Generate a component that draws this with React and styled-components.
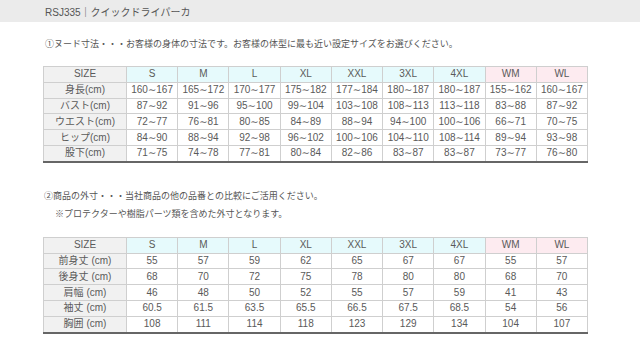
import React from "react";
import styled, { createGlobalStyle } from "styled-components";

const GlobalStyle = createGlobalStyle`
  body {
    margin: 0;
    background: #ffffff;
    font-family: "Liberation Sans", "Noto Sans CJK JP", sans-serif;
    color: #555;
  }
`;

const sizes = ["S", "M", "L", "XL", "XXL", "3XL", "4XL", "WM", "WL"];

const nudeRows = [
  ["身長(cm)", "160∼167", "165∼172", "170∼177", "175∼182", "177∼184", "180∼187", "180∼187", "155∼162", "160∼167"],
  ["バスト(cm)", "87∼92", "91∼96", "95∼100", "99∼104", "103∼108", "108∼113", "113∼118", "83∼88", "87∼92"],
  ["ウエスト(cm)", "72∼77", "76∼81", "80∼85", "84∼89", "88∼94", "94∼100", "100∼106", "66∼71", "70∼75"],
  ["ヒップ(cm)", "84∼90", "88∼94", "92∼98", "96∼102", "100∼106", "104∼110", "108∼114", "89∼94", "93∼98"],
  ["股下(cm)", "71∼75", "74∼78", "77∼81", "80∼84", "82∼86", "83∼87", "83∼87", "73∼77", "76∼80"],
];

const productRows = [
  ["前身丈 (cm)", "55", "57", "59", "62", "65", "67", "67", "55", "57"],
  ["後身丈 (cm)", "68", "70", "72", "75", "78", "80", "80", "68", "70"],
  ["肩幅 (cm)", "46", "48", "50", "52", "55", "57", "59", "41", "43"],
  ["袖丈 (cm)", "60.5", "61.5", "63.5", "65.5", "66.5", "67.5", "68.5", "54", "56"],
  ["胸囲 (cm)", "108", "111", "114", "118", "123", "129", "134", "104", "107"],
];

const Page = styled.div`
  width: 640px;
  height: 345px;
  overflow: hidden;
`;

const TitleBar = styled.div`
  height: 22px;
  background: #ebebeb;
  display: flex;
  align-items: center;
  padding-left: 45px;
  font-size: 10px;
  color: #555;
`;

const Content = styled.div`
  padding-left: 43px;
  display: flex;
  flex-direction: column;
`;

const Note = styled.p`
  margin: ${(p) => p.$top || 0}px 0 0 ${(p) => p.$indent || 0}px;
  font-size: 9px;
  line-height: 14px;
  color: #555;
  white-space: nowrap;
`;

const Table = styled.table`
  margin-top: ${(p) => p.$top}px;
  width: 545px;
  border-collapse: collapse;
  table-layout: fixed;
  border-top: 1px solid #a8a8a8;
  border-right: 1px solid #a8a8a8;
  border-left: 1px solid #666;
  border-bottom: 2px solid #666;
`;

const Cell = styled.td`
  height: 14.8px;
  padding: 0;
  border: 1px solid #cfcfcf;
  text-align: center;
  font-family: "Liberation Sans", "DejaVu Sans", "Noto Sans CJK JP", sans-serif;
  font-size: 10px;
  line-height: 14px;
  color: #5a5a5a;
  white-space: nowrap;
  background: ${(p) =>
    p.$kind === "label"
      ? "#f1f1f1"
      : p.$kind === "men"
      ? "#e6fafc"
      : p.$kind === "women"
      ? "#fdebf0"
      : "#ffffff"};
`;

const FirstCol = styled.col`
  width: 83px;
`;

const SizeTable = ({ rows, top }) => (
  <Table $top={top}>
    <colgroup>
      <FirstCol />
      {sizes.map((s) => (
        <col key={s} />
      ))}
    </colgroup>
    <tbody>
      <tr>
        <Cell $kind="label">SIZE</Cell>
        {sizes.map((s) => (
          <Cell key={s} $kind={s.startsWith("W") ? "women" : "men"}>
            {s}
          </Cell>
        ))}
      </tr>
      {rows.map((row) => (
        <tr key={row[0]}>
          <Cell $kind="label">{row[0]}</Cell>
          {row.slice(1).map((v, i) => (
            <Cell key={i}>{v}</Cell>
          ))}
        </tr>
      ))}
    </tbody>
  </Table>
);

export default function App() {
  return (
    <Page>
      <GlobalStyle />
      <TitleBar>RSJ335｜クイックドライパーカ</TitleBar>
      <Content>
        <Note $top={15} $indent={2}>
          ①ヌード寸法・・・お客様の身体の寸法です。お客様の体型に最も近い設定サイズをお選びください。
        </Note>
        <SizeTable rows={nudeRows} top={15} />
        <Note $top={26} $indent={1}>
          ②商品の外寸・・・当社商品の他の品番との比較にご活用ください。
        </Note>
        <Note $top={4} $indent={12}>
          ※プロテクターや樹脂パーツ類を含めた外寸となります。
        </Note>
        <SizeTable rows={productRows} top={16} />
      </Content>
    </Page>
  );
}
